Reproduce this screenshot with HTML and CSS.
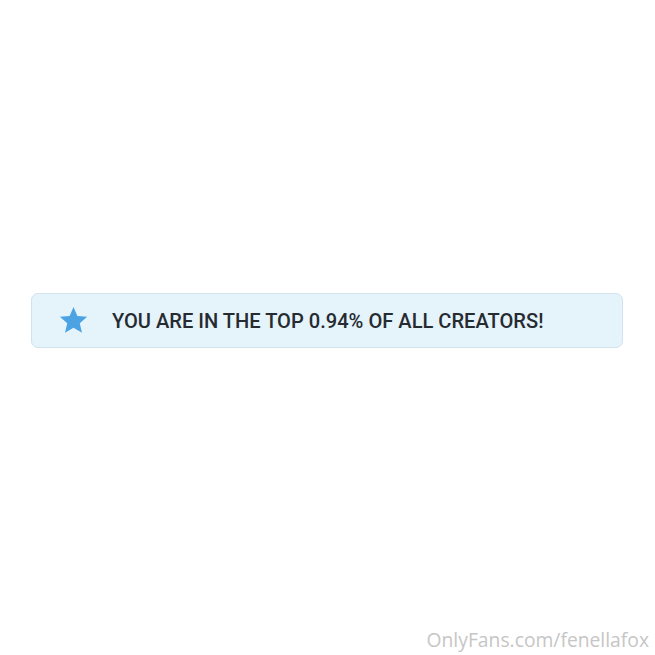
FILE: index.html
```html
<!DOCTYPE html>
<html>
<head>
<meta charset="utf-8">
<link rel="stylesheet" href="styles.css">
</head>
<body>
<div class="page">
  <div class="banner">
    <svg class="star" viewBox="0 0 24 24" width="31" height="30"><path d="M12 1.6l3.1 7.2 7.8.6-5.9 5.1 1.8 7.7L12 18.1l-6.8 4.1 1.8-7.7-5.9-5.1 7.8-.6z" fill="#4ba3e3"/></svg>
    <span class="msg">YOU ARE IN THE TOP 0.94% OF ALL CREATORS!</span>
  </div>
  <div class="mark">OnlyFans.com/fenellafox</div>
</div>
</body>
</html>
```
FILE: styles.css
```css
html, body { margin: 0; padding: 0; background: #fff; }
.page {
  width: 655px;
  height: 655px;
  display: flex;
  flex-direction: column;
  box-sizing: border-box;
  padding: 293px 32px 0 31px;
}
.banner {
  height: 55px;
  box-sizing: border-box;
  border: 1px solid #d2e2ee;
  border-radius: 7px;
  background: #e5f3fb;
  display: flex;
  align-items: center;
  padding-left: 26px;
  gap: 23px;
}
.star { display: block; margin-top: -1px; }
.msg {
  font-family: Roboto, "Liberation Sans", sans-serif;
  font-weight: 500;
  font-size: 20.1px;
  color: #262b31;
}
.mark {
  margin-top: auto;
  margin-bottom: 2px;
  align-self: flex-end;
  margin-right: -26px;
  font-family: "Open Sans", sans-serif;
  font-size: 19.3px;
  color: #c6c6c6;
}
```
